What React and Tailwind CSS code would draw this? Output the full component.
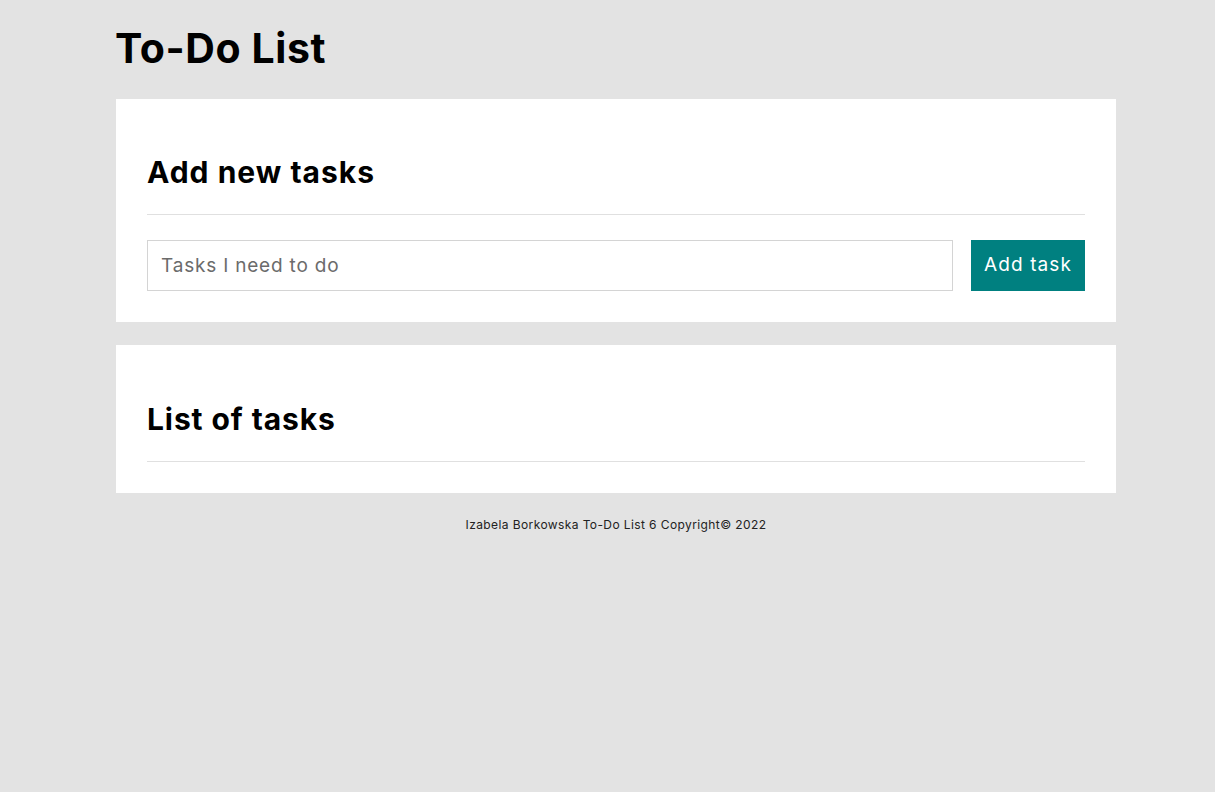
export default function App() {
  return (
    <div className="min-h-[792px] bg-[#e3e3e3] text-black" style={{ fontFamily: "Inter, 'Open Sans', sans-serif" }}>
      <div className="w-[1000px] ml-[116px]">
        <header className="h-[99px] pt-[23px]">
          <h1 className="text-[41px] leading-[50px] font-bold tracking-[0.6px] -ml-px">To-Do List</h1>
        </header>

        <section className="bg-white px-[31px] pt-[31px] pb-[31px]">
          <div className="h-[85px] flex items-center border-b border-[#e0e0e0]">
            <h2 className="text-[30px] font-bold leading-none tracking-[1px]">Add new tasks</h2>
          </div>
          <form className="flex gap-[18px] mt-[25px]" onSubmit={e => e.preventDefault()}>
            <input
              className="flex-1 h-[51px] border border-[#d4d4d4] px-[13px] text-[19px] tracking-[0.8px] outline-none placeholder:text-[#6b6b6b]"
              placeholder="Tasks I need to do"
            />
            <button className="w-[114px] h-[51px] bg-[#008080] text-white text-[19px] tracking-[1.1px]">Add task</button>
          </form>
        </section>

        <section className="bg-white px-[31px] pt-[31px] pb-[31px] mt-[23px]">
          <div className="h-[86px] flex items-center border-b border-[#e0e0e0]">
            <h2 className="text-[30px] font-bold leading-none tracking-[0.9px]">List of tasks</h2>
          </div>
        </section>

        <footer className="text-center text-[12px] text-[#222] mt-[23px] tracking-[0.4px]">
          Izabela Borkowska To-Do List 6 Copyright© 2022
        </footer>
      </div>
    </div>
  );
}
